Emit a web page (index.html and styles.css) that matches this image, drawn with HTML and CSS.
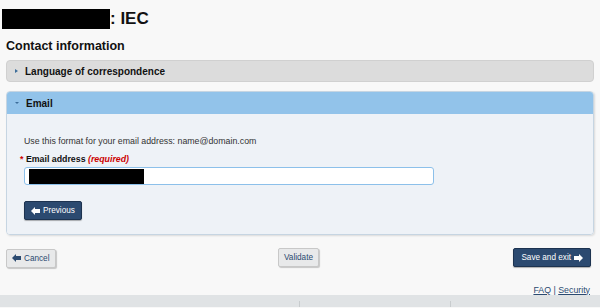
FILE: index.html
```html
<!DOCTYPE html>
<html>
<head>
    <title>IEC - Contact information</title>
    <meta charset="UTF-8">
    <meta name="viewport" content="width=device-width, initial-scale=1.0">
    <link rel="stylesheet" href="styles.css">
</head>
<body>
    <div class="page">
        <h1 class="title"><span class="redacted title-redacted"></span>: IEC</h1>
        <h2 class="section-title">Contact information</h2>

        <div class="panel panel-closed">
            <div class="panel-heading">
                <span class="caret caret-right"></span>
                <span>Language of correspondence</span>
            </div>
        </div>

        <div class="panel panel-open">
            <div class="panel-heading">
                <span class="caret caret-down"></span>
                <span>Email</span>
            </div>
            <div class="panel-body">
                <p class="hint">Use this format for your email address: name@domain.com</p>
                <label class="field-label"><span class="star">*</span> Email address <em class="required">(required)</em></label>
                <div class="input-box">
                    <span class="redacted input-redacted"></span>
                </div>
                <button class="btn btn-primary btn-prev">
                    <svg width="9" height="8" viewBox="0 0 9 8"><path d="M0 4 L4 0 L4 2 L9 2 L9 6 L4 6 L4 8 Z" fill="#fff"/></svg>
                    Previous
                </button>
            </div>
        </div>

        <div class="actions">
            <div class="actions-left">
                <button class="btn btn-default">
                    <svg width="9" height="8" viewBox="0 0 9 8"><path d="M0 4 L4 0 L4 2 L9 2 L9 6 L4 6 L4 8 Z" fill="#2b4a70"/></svg>
                    Cancel
                </button>
            </div>
            <button class="btn btn-default">Validate</button>
            <div class="actions-right">
                <button class="btn btn-primary">
                    Save and exit
                    <svg width="9" height="8" viewBox="0 0 9 8"><path d="M9 4 L5 0 L5 2 L0 2 L0 6 L5 6 L5 8 Z" fill="#fff"/></svg>
                </button>
            </div>
        </div>

        <div class="footer-links">
            <a href="#">FAQ</a> | <a href="#">Security</a>
        </div>
    </div>
    <div class="bottom-bar">
        <span></span><span></span>
    </div>
</body>
</html>
```

FILE: styles.css
```css
html, body {
    margin: 0;
    padding: 0;
    background-color: #f8f8f8;
    font-family: Arial, "Liberation Sans", sans-serif;
    color: #222;
}
.page {
    padding: 9px 6px 0 6px;
}
.title {
    margin: 0 0 0 -4px;
    font-size: 17px;
    line-height: 20px;
    display: flex;
    align-items: center;
    color: #111;
}
.redacted {
    display: inline-block;
    background-color: #000;
}
.title-redacted {
    width: 108px;
    height: 20px;
}
.section-title {
    margin: 10px 0 0 0;
    font-size: 12.5px;
    line-height: 14px;
    color: #111;
}
.panel {
    border-radius: 4px;
    border: 1px solid #cfd3d6;
    margin-top: 7px;
}
.panel-heading {
    display: flex;
    align-items: center;
    gap: 7px;
    padding: 0 8px;
    font-size: 10px;
    font-weight: bold;
    color: #111;
}
.panel-closed {
    background-color: #dcdcdc;
    border-color: #d0d0d0;
}
.panel-closed .panel-heading {
    height: 20px;
}
.panel-open {
    margin-top: 9px;
    border-color: #c6d5e2;
    box-shadow: 1px 1px 2px rgba(0, 0, 0, 0.12);
}
.panel-open .panel-heading {
    height: 22px;
    background-color: #92c3ea;
    border-radius: 3px 3px 0 0;
}
.caret {
    width: 0;
    height: 0;
    display: inline-block;
}
.caret-right {
    border-top: 2px solid transparent;
    border-bottom: 2px solid transparent;
    border-left: 3px solid #3d6e9a;
}
.caret-down {
    border-left: 2px solid transparent;
    border-right: 2px solid transparent;
    border-top: 2px solid #3d6e9a;
}
.panel-body {
    background-color: #eef2f7;
    padding: 22px 17px 14px 17px;
    border-radius: 0 0 3px 3px;
}
.hint {
    margin: 0;
    font-size: 8.8px;
    line-height: 10px;
    color: #333;
}
.field-label {
    display: block;
    margin: 8px 0 0 -4px;
    font-size: 8.8px;
    line-height: 10px;
    font-weight: bold;
    color: #111;
}
.star {
    color: #c00;
}
.required {
    color: #c00;
}
.input-box {
    width: 400px;
    height: 16px;
    margin-top: 3px;
    padding: 0 4px;
    background-color: #fff;
    border: 1px solid #8cc0ea;
    border-radius: 3px;
    display: flex;
    align-items: center;
}
.input-redacted {
    width: 115px;
    height: 15px;
}
.btn {
    font-family: Arial, "Liberation Sans", sans-serif;
    font-size: 8.2px;
    height: 19px;
    padding: 0 5px;
    border-radius: 2px;
    display: inline-flex;
    align-items: center;
    gap: 3px;
    cursor: pointer;
}
.btn-primary {
    background-color: #2c4a70;
    color: #fff;
    border: 1px solid #1d3350;
    box-shadow: 0 1px 1px rgba(0, 0, 0, 0.3);
}
.btn-default {
    background-color: #e8e9ea;
    color: #2b4a70;
    border: 1px solid #c8c8c8;
    box-shadow: 1px 1px 1px rgba(0, 0, 0, 0.2);
}
.btn-prev {
    margin-top: 16px;
    padding: 0 6px;
}
.actions {
    margin-top: 13px;
    display: grid;
    grid-template-columns: 1fr auto 1fr;
    align-items: center;
    padding-right: 3px;
}
.actions-right {
    display: flex;
    justify-content: flex-end;
}
.actions .btn-primary {
    padding: 0 7px;
}
.footer-links {
    margin-top: 17px;
    text-align: right;
    font-size: 8.8px;
    line-height: 10px;
    color: #2b4a70;
    padding-right: 4px;
}
.footer-links a {
    color: #2b4a70;
}
.bottom-bar {
    height: 12px;
    background-color: #e0e3e5;
    display: flex;
    padding-left: 299px;
    gap: 150px;
}
.bottom-bar span {
    width: 1px;
    height: 6px;
    margin-top: 6px;
    background-color: #c8ccce;
}
```
